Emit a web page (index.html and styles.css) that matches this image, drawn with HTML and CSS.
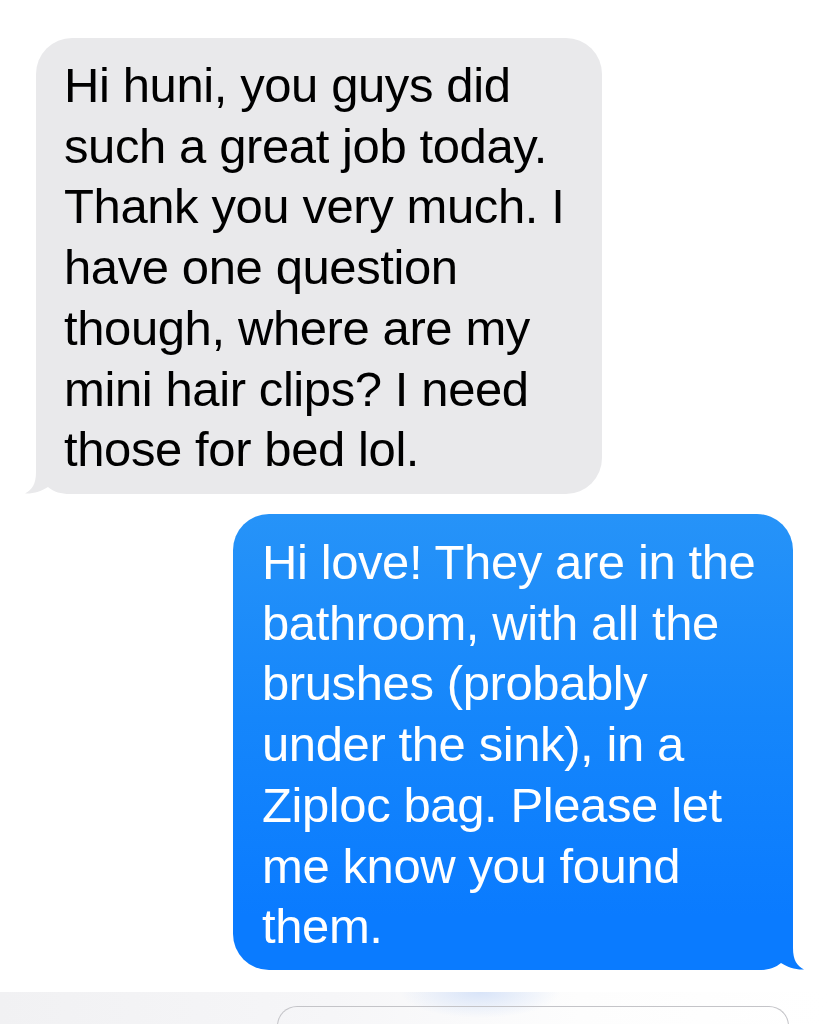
FILE: index.html
```html
<!DOCTYPE html>
<html>
<head>
<meta charset="utf-8">
<link rel="stylesheet" href="styles.css">
</head>
<body>
<main class="thread">
  <div class="bubble received">
    <p class="text">Hi huni, you guys did<br>such a great job today.<br>Thank you very much. I<br>have one question<br>though, where are my<br>mini hair clips? I need<br>those for bed lol.</p>
    <svg class="tail" width="50" height="50" viewBox="0 0 50 50"><path d="M11,0 L11,28 C11,40 7,46 0,49.5 C8,50 17,47 23,43 C29,48 36,50 45,50 L50,50 L50,0 Z"/></svg>
  </div>
  <div class="bubble sent">
    <p class="text">Hi love! They are in the<br>bathroom, with all the<br>brushes (probably<br>under the sink), in a<br>Ziploc bag. Please let<br>me know you found<br>them.</p>
    <svg class="tail" width="50" height="50" viewBox="0 0 50 50"><path d="M11,0 L11,28 C11,40 7,46 0,49.5 C8,50 17,47 23,43 C29,48 36,50 45,50 L50,50 L50,0 Z"/></svg>
  </div>
</main>
<footer class="composer">
  <div class="input"></div>
</footer>
</body>
</html>
```
FILE: styles.css
```css
html, body {
  margin: 0;
  padding: 0;
  background: #ffffff;
  height: 1024px;
  overflow: hidden;
}
.thread {
  display: flex;
  flex-direction: column;
  padding-top: 38px;
  gap: 20px;
}
.bubble {
  position: relative;
  border-radius: 36px;
  box-sizing: border-box;
}
.text {
  position: relative;
  z-index: 1;
  margin: 0;
  font-family: "Liberation Sans", Arial, sans-serif;
  font-size: 49px;
  letter-spacing: -0.4px;
  line-height: 60.7px;
  white-space: nowrap;
}
.received {
  margin-left: 36px;
  width: 566px;
  height: 456px;
  background: #e9e9eb;
  padding: 17px 0 0 28px;
  color: #000;
}
.sent {
  margin-left: 233px;
  width: 560px;
  height: 456px;
  background: linear-gradient(180deg, #2693f8 0%, #1586fb 45%, #0a7bff 88%, #0a7bff 100%);
  padding: 18px 0 0 29px;
  color: #fff;
}
.tail {
  position: absolute;
  bottom: 0;
  display: block;
}
.received .tail {
  left: -11px;
  fill: #e9e9eb;
}
.sent .tail {
  right: -11px;
  transform: scaleX(-1);
  fill: #0a7bff;
}
.composer {
  margin-top: 22px;
  height: 40px;
  padding-top: 14px;
  padding-left: 277px;
  background:
    radial-gradient(ellipse 80px 26px at 480px 0px, rgba(210, 224, 248, 0.85), rgba(210, 224, 248, 0) 100%),
    linear-gradient(90deg, #f1f1f3 0%, #f6f6f8 40%, #fdfdfd 70%, #ffffff 100%);
}
.input {
  width: 512px;
  height: 40px;
  box-sizing: border-box;
  border: 1.5px solid #c4c4c8;
  border-bottom: none;
  border-radius: 20px 20px 0 0;
  background: transparent;
}
```
